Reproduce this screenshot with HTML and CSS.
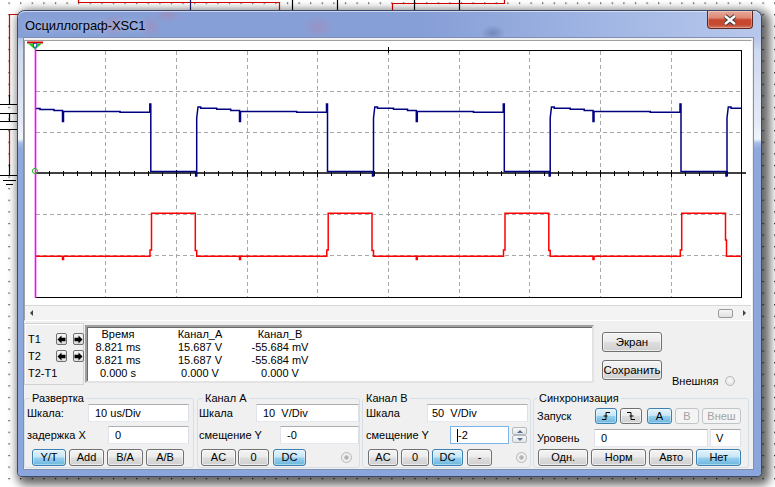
FILE: index.html
```html
<!DOCTYPE html>
<html lang="ru">
<head>
<meta charset="utf-8">
<title>Осциллограф-XSC1</title>
<link rel="stylesheet" href="styles.css">
</head>
<body>
<svg class="desk" width="775" height="487" viewBox="0 0 775 487">
  <defs>
    <pattern id="dots" x="8.5" y="2.5" width="11.6" height="11.6" patternUnits="userSpaceOnUse">
      <rect width="1.2" height="1.2" fill="#111"/>
    </pattern>
  </defs>
  <rect width="775" height="487" fill="#fff"/>
  <rect width="775" height="487" fill="url(#dots)"/>
  <g fill="none" stroke-width="1.2">
    <path stroke="#d00" d="M78.5 0V2.5H279.5V12"/>
    <path stroke="#d00" d="M504.5 0V3.5H392.5V12"/>
    <path stroke="#1a1a6a" d="M190.5 0V12"/>
    <path stroke="#000" d="M292.5 0V12M337.5 0V12M414.5 0V12M459.5 0V12"/>
    <path stroke="#d00" d="M20 14.5H9.5V95"/>
    <path stroke="#000" d="M9.5 95V104.5M0 104.5H18M0 113.5H18M9.5 113.5V121.5M0 121.5H18M0 129.5H18"/>
    <path stroke="#d00" d="M9.5 129.5V164"/>
    <path stroke="#000" d="M9.5 164V175.5M0 175.5H18M3 180.5H16M6 184.5H13"/>
  </g>
</svg>

<div class="win">
  <div class="titlebar">
    <span class="title">Осциллограф-XSC1</span>
    <div class="close">
      <svg width="16" height="12" viewBox="0 0 16 12"><path d="M3 2L13 10M13 2L3 10" stroke="#3a3a3a" stroke-width="4.4"/><path d="M3 2L13 10M13 2L3 10" stroke="#fff" stroke-width="2.4"/></svg>
    </div>
  </div>

  <div class="client">
    <div class="scope">
      <svg class="plot" width="726" height="264" viewBox="25 41 726 264">
        <rect x="25" y="41" width="726" height="264" fill="#fff"/>
        <g stroke="#a8a8a8" stroke-width="1" stroke-dasharray="4 3" fill="none">
          <path d="M105.5 51V297M176.5 51V297M247.5 51V297M317.5 51V297M388.5 51V297M459.5 51V297M529.5 51V297M600.5 51V297M671.5 51V297"/>
          <path d="M36 91.5H742M36 132.5H742M36 214.5H742M36 255.5H742"/>
        </g>
        <path d="M35 173H746" stroke="#000" stroke-width="1.6"/>
        <path stroke="#000" stroke-width="1" d="M49.5 171V176M63.5 171V176M77.5 171V176M91.5 171V176M119.5 171V176M134.5 171V176M148.5 171V176M162.5 171V176M190.5 171V176M204.5 171V176M218.5 171V176M232.5 171V176M261.5 171V176M275.5 171V176M289.5 171V176M303.5 171V176M331.5 171V176M346.5 171V176M360.5 171V176M374.5 171V176M402.5 171V176M416.5 171V176M430.5 171V176M445.5 171V176M473.5 171V176M487.5 171V176M501.5 171V176M515.5 171V176M544.5 171V176M558.5 171V176M572.5 171V176M586.5 171V176M614.5 171V176M628.5 171V176M643.5 171V176M657.5 171V176M685.5 171V176M699.5 171V176M713.5 171V176M727.5 171V176M105.5 170V177M176.5 170V177M247.5 170V177M317.5 170V177M388.5 169V178M459.5 170V177M529.5 170V177M600.5 170V177M671.5 170V177M388.5 47V53"/>
        <rect x="35.5" y="50.5" width="706" height="247" fill="none" stroke="#000" stroke-width="1"/>
        <path fill="none" stroke="#ff0000" stroke-width="1.5" d="M35,256.3 L62.5,256.3 L62.5,259.5 L63.5,259.5 L63.5,256.3 L150,256.3 L150,250 L151.5,250 L151.5,213.3 L195.3,213.3 L195.3,250.5 L196.7,250.5 L196.7,256.3 L239.5,256.3 L239.5,259.5 L240.5,259.5 L240.5,256.3 L326.8,256.3 L326.8,250 L328.2,250 L328.2,213.3 L372,213.3 L372,250.5 L373.5,250.5 L373.5,256.3 L416.3,256.3 L416.3,259.5 L417.3,259.5 L417.3,256.3 L503.5,256.3 L503.5,250 L505,250 L505,213.3 L548.8,213.3 L548.8,250.5 L550.2,250.5 L550.2,256.3 L593,256.3 L593,259.5 L594,259.5 L594,256.3 L680.3,256.3 L680.3,250 L681.7,250 L681.7,213.3 L725.5,213.3 L725.5,240 L726.5,240 L726.5,256.3 L742,256.3"/>
        <path fill="none" stroke="#000080" stroke-width="1.5" d="M35,108.5 L40,108.5 L40,109.5 L54,109.5 L54,110.5 L62.5,110.5 L62.5,121.5 L63.5,121.5 L63.5,111.5 L120,111.5 L120,112.3 L149.8,112.3 L149.8,104 L150.8,104 L150.8,171.5 L195.7,171.5 L195.7,176 L196.7,176 L196.7,118 L198,107 L200.7,107 L200.7,108.3 L216.7,108.3 L216.7,109.3 L230.7,109.3 L230.7,110.5 L239.5,110.5 L239.5,121.5 L240.5,121.5 L240.5,111.5 L296.7,111.5 L296.7,112.3 L326.5,112.3 L326.5,104 L327.5,104 L327.5,171.5 L372.5,171.5 L372.5,176 L373.5,176 L373.5,118 L374.8,107 L377.5,107 L377.5,108.3 L393.5,108.3 L393.5,109.3 L407.5,109.3 L407.5,110.5 L416.3,110.5 L416.3,121.5 L417.3,121.5 L417.3,111.5 L473.5,111.5 L473.5,112.3 L503.3,112.3 L503.3,104 L504.3,104 L504.3,171.5 L549.2,171.5 L549.2,176 L550.2,176 L550.2,118 L551.5,107 L554.2,107 L554.2,108.3 L570.2,108.3 L570.2,109.3 L584.2,109.3 L584.2,110.5 L593,110.5 L593,121.5 L594,121.5 L594,111.5 L650.2,111.5 L650.2,112.3 L680,112.3 L680,104 L681,104 L681,171.5 L726,171.5 L726,176 L727,176 L727,118 L728.3,107 L731,107 L731,108.3 L742,108.3"/>
        <path d="M35.5 44V298" stroke="#ff00ff" stroke-width="1.6"/>
        <circle cx="35" cy="171" r="2.6" fill="none" stroke="#20c020" stroke-width="1"/>
        <rect x="27" y="41.5" width="16" height="2" fill="#e00000"/>
        <path d="M28 43.5H42L35 49.5Z" fill="#22cc22"/>
        <rect x="33.5" y="43.5" width="3" height="3.5" fill="#fff" stroke="#2040c0" stroke-width="0.8"/>
      </svg>
      <div class="hscroll">
        <span class="sarrow"><i class="tri-l"></i></span>
        <span class="sfill"></span>
        <span class="thumb"></span>
        <span class="sarrow"><i class="tri-r"></i></span>
      </div>
    </div>

    <div class="readrow">
      <div class="tbox">
        <span class="tl">T1</span>
        <span class="ab"><svg width="9" height="9" viewBox="0 0 9 9"><path d="M0.5 4.5L4.5 0.5V2.8H8.5V6.2H4.5V8.5Z"/></svg></span>
        <span class="ab"><svg width="9" height="9" viewBox="0 0 9 9"><path d="M8.5 4.5L4.5 0.5V2.8H0.5V6.2H4.5V8.5Z"/></svg></span>
        <span class="tl">T2</span>
        <span class="ab"><svg width="9" height="9" viewBox="0 0 9 9"><path d="M0.5 4.5L4.5 0.5V2.8H8.5V6.2H4.5V8.5Z"/></svg></span>
        <span class="ab"><svg width="9" height="9" viewBox="0 0 9 9"><path d="M8.5 4.5L4.5 0.5V2.8H0.5V6.2H4.5V8.5Z"/></svg></span>
        <span class="tl tdiff">T2-T1</span>
      </div>
      <div class="readout">
        <span>Время</span><span>Канал_A</span><span>Канал_B</span>
        <span>8.821 ms</span><span>15.687 V</span><span>-55.684 mV</span>
        <span>8.821 ms</span><span>15.687 V</span><span>-55.684 mV</span>
        <span>0.000 s</span><span>0.000 V</span><span>0.000 V</span>
      </div>
      <div class="btncol">
        <button class="btn big">Экран</button>
        <button class="btn big">Сохранить</button>
      </div>
      <div class="ext"><span>Внешняя</span><span class="radio plain"></span></div>
    </div>

    <div class="groups">
      <fieldset class="grp g-sweep">
        <legend>Развертка</legend>
        <div class="r1"><span>Шкала:</span><span class="inp w101">10 us/Div</span></div>
        <div class="r2"><span>задержка X</span><span class="inp w81">0</span></div>
        <div class="r3 bt-sweep">
          <button class="btn on w34">Y/T</button>
          <button class="btn w35">Add</button>
          <button class="btn w36">B/A</button>
          <button class="btn w38">A/B</button>
        </div>
      </fieldset>

      <fieldset class="grp g-a">
        <legend>Канал A</legend>
        <div class="r1"><span>Шкала</span><span class="inp w103">10  V/Div</span></div>
        <div class="r2"><span>смещение Y</span><span class="inp w79">-0</span></div>
        <div class="r3 bt-a">
          <button class="btn w35">AC</button>
          <button class="btn w31">0</button>
          <button class="btn on w33">DC</button>
          <span class="radio dot ra"></span>
        </div>
      </fieldset>

      <fieldset class="grp g-b">
        <legend>Канал B</legend>
        <div class="r1"><span>Шкала</span><span class="inp w101 ib">50  V/Div</span></div>
        <div class="r2"><span>смещение Y</span><span class="inp w59 focus"><span class="caret"></span>-2</span>
          <span class="spin"><span class="sp"><i class="up"></i></span><span class="sp"><i class="dn"></i></span></span>
        </div>
        <div class="r3 bt-b">
          <button class="btn w30">AC</button>
          <button class="btn w28">0</button>
          <button class="btn on w31">DC</button>
          <button class="btn w25">-</button>
          <span class="radio dot rb"></span>
        </div>
      </fieldset>

      <fieldset class="grp g-s">
        <legend>Синхронизация</legend>
        <div class="r1 s1"><span>Запуск</span>
          <span class="trig">
            <button class="btn on w22"><svg width="10" height="10" viewBox="0 0 10 10"><path d="M1 8.5H5V1.5H9M2.5 5H6.5" fill="none" stroke="#000" stroke-width="1"/></svg></button>
            <button class="btn w22"><svg width="10" height="10" viewBox="0 0 10 10"><path d="M1 1.5H5V8.5H9M3.5 5H7.5" fill="none" stroke="#000" stroke-width="1"/></svg></button>
            <button class="btn on w25 gapl">A</button>
            <button class="btn dis w24">B</button>
            <button class="btn dis w39">Внеш</button>
          </span>
        </div>
        <div class="r2 s2"><span>Уровень</span><span class="inp w114">0</span><span class="inp w31 iv">V</span></div>
        <div class="r3 s3">
          <button class="btn w51">Одн.</button>
          <button class="btn w55">Норм</button>
          <button class="btn w45">Авто</button>
          <button class="btn on w45">Нет</button>
        </div>
      </fieldset>
    </div>
  </div>
</div>
</body>
</html>
```

FILE: styles.css
```css
* { box-sizing: border-box; }
html, body { margin: 0; padding: 0; }
body {
  width: 775px; height: 487px; overflow: hidden; position: relative;
  background: #fff;
  font-family: "Liberation Sans", Arial, sans-serif; font-size: 11px; color: #000;
}
.desk { position: absolute; left: 0; top: 0; display: block; }

.win {
  position: absolute; left: 18px; top: 11px; width: 743px; height: 465px;
  display: flex; flex-direction: column;
  border-radius: 7px 7px 4px 4px;
  background: linear-gradient(180deg, #a9bce5 0, #b7c7ea 27px, #cfd9ef 40px, #e3e9f6 110px, #f0f4fb 128px, #a6bde6 132px, #8ea9dd 138px, #8aa6dc 100%);
  box-shadow: 0 0 0 1px #3b4a66, 4px 4px 10px 5px rgba(0,0,0,.6);
}
.titlebar {
  height: 27px; flex: none;
  display: flex; justify-content: space-between; align-items: flex-start;
  padding-left: 7px;
  border-radius: 7px 7px 0 0;
  background:
    radial-gradient(ellipse 14px 12px at 95px 14px, rgba(190,120,150,.35), transparent),
    radial-gradient(ellipse 12px 12px at 132px 16px, rgba(190,120,150,.3), transparent),
    radial-gradient(ellipse 16px 12px at 300px 16px, rgba(190,120,150,.3), transparent),
    radial-gradient(ellipse 14px 8px at 150px 4px, rgba(190,120,150,.35), transparent),
    radial-gradient(ellipse 12px 8px at 475px 22px, rgba(60,80,130,.35), transparent),
    linear-gradient(90deg, #869fd7 0, #879fd7 55%, #a2b7e4 80%, #b8c8eb 100%);
  box-shadow: inset 0 1px 0 rgba(255,255,255,.55);
}
.title {
  font-size: 13px; line-height: 29px; letter-spacing: -0.1px;
  text-shadow: 0 0 6px rgba(255,255,255,.5);
}
.close {
  width: 46px; height: 18px; margin-right: 8px;
  display: flex; align-items: center; justify-content: center;
  border: 1px solid #5e2a20; border-top: none;
  border-radius: 0 0 4px 4px;
  background: linear-gradient(180deg, #e8a899 0%, #dd8a75 40%, #c9472e 52%, #c54a31 80%, #d6755e 100%);
  box-shadow: inset 0 0 0 1px rgba(255,255,255,.3);
}
.close svg { display: block; }

.client {
  flex: 1; min-height: 0;
  margin: 0 8px 7px 6px;
  background: #f0f0f0;
  display: flex; flex-direction: column;
  padding: 2px 1px 0 0;
  box-shadow: 0 0 0 1px #7d8fb2;
}

/* scope */
.scope {
  height: 281px; flex: none;
  border: 1px solid; border-color: #a0a0a0 #fff #fff #a0a0a0;
  box-shadow: inset 1px 1px 0 #696969, inset -1px -1px 0 #dcdcdc;
  display: flex; flex-direction: column;
  background: #fff;
}
.plot { display: block; flex: none; }
.hscroll {
  height: 15px; flex: none;
  display: flex; align-items: center;
  background: #f3f3f3;
  border-top: 1px solid #d8d8d8;
}
.sarrow { width: 12px; height: 14px; display: flex; align-items: center; justify-content: center; }
.sarrow:last-child { width: 14px; }
.tri-l { width: 0; height: 0; border-style: solid; border-width: 3px 3px 3px 0; border-color: transparent #404040 transparent transparent; }
.tri-r { width: 0; height: 0; border-style: solid; border-width: 3px 0 3px 3px; border-color: transparent transparent transparent #404040; }
.sfill { flex: 1; }
.thumb {
  width: 15px; height: 9px; margin-right: 4px;
  border: 1px solid #9a9a9a; border-radius: 2px;
  background: linear-gradient(#f6f6f6, #e1e1e1);
}

/* readout row */
.readrow { display: flex; align-items: flex-start; margin-top: 2px; height: 62px; flex: none; }
.tbox {
  width: 60px; height: 62px;
  border: 1px solid #d2d2d2;
  box-shadow: inset 1px 1px 0 #fff;
  display: grid;
  grid-template-columns: 22px 11px 11px;
  grid-template-rows: 12px 12px 13px;
  column-gap: 6px; row-gap: 5px;
  padding: 9px 0 0 3px;
  line-height: 13px;
}
.tl { align-self: center; }
.tdiff { grid-column: 1 / span 3; }
.ab {
  width: 11px; height: 12px;
  border: 1px solid #707070; border-radius: 2px;
  background: linear-gradient(#f5f5f5, #dcdcdc);
  display: flex; align-items: center; justify-content: center;
}
.ab svg { display: block; fill: #000; }
.readout {
  width: 509px; height: 58px;
  margin: 2px 0 0 1px;
  background: #fff;
  border: 2px solid; border-color: #a0a0a0 #e3e3e3 #e3e3e3 #a0a0a0;
  box-shadow: inset 1px 1px 0 #696969;
  display: grid;
  grid-template-columns: 62px 102px 58px;
  grid-auto-rows: 13px;
  padding-top: 1px;
  line-height: 13px;
  text-align: center;
  white-space: nowrap;
}
.btncol { display: flex; flex-direction: column; gap: 8px; margin: 9px 0 0 8px; }
.ext { display: flex; align-items: center; gap: 7px; margin-left: 10px; align-self: flex-end; height: 11px; margin-bottom: -1px; }

/* buttons */
.btn {
  font: inherit; color: #000; margin: 0; padding: 0;
  height: 17px;
  border: 1px solid #707070; border-radius: 3px;
  background: linear-gradient(180deg, #f3f3f3 0%, #ebebeb 49%, #dddddd 51%, #d0d0d0 100%);
  box-shadow: inset 0 0 0 1px rgba(255,255,255,.6);
  display: flex; align-items: center; justify-content: center;
  line-height: 13px;
}
.btn.big { width: 60px; height: 20px; font-size: 11.5px; }
.btn.on {
  border-color: #3c7fb1;
  background: linear-gradient(180deg, #e5f4fc 0%, #c4e5f6 49%, #98d1ef 51%, #6cb6dd 100%);
  box-shadow: inset 0 0 0 1px rgba(255,255,255,.4);
}
.btn.dis { border-color: #c2c5c8; background: #f4f4f4; color: #a3a3a3; box-shadow: none; }
.btn svg { display: block; }

.radio { width: 10px; height: 10px; border-radius: 50%; border: 1px solid #b8b8b8; display: block; flex: none; }
.radio.plain { background: radial-gradient(circle at 50% 40%, #fafafa, #dcdcdc); }
.radio.dot { width: 11px; height: 11px; background: radial-gradient(circle, #a9a9a9 0, #bdbdbd 30%, #f2f2f2 42%, #e4e4e4 100%); }

/* groups */
.groups { display: flex; margin-top: 8px; flex: none; }
.grp {
  margin: 0; min-width: 0;
  border: 1px solid #d5dfe5; border-radius: 3px;
  display: flex; flex-direction: column;
  padding-top: 0; padding-bottom: 1px;
}
.grp legend { padding: 0 2px; line-height: 11px; font-size: 11px; }
.g-sweep { width: 170px; padding-left: 2px; padding-right: 4px; }
.g-sweep legend { margin-left: 3px; }
.g-a { width: 163px; margin-left: 3px; padding-left: 1px; padding-right: 0; }
.g-a legend { margin-left: 4px; }
.g-b { width: 169px; margin-left: 2px; padding-left: 3px; padding-right: 2px; }
.g-b legend { margin-left: -2px; }
.g-s { width: 216px; margin-left: 2px; padding-left: 3px; padding-right: 7px; }
.g-s legend { margin-left: 0; }

.r1, .r2, .r3 { display: flex; align-items: center; flex: none; }
.r1 { height: 18px; }
.r2 { height: 18px; margin-top: 4px; }
.r3 { height: 17px; margin-top: 5px; }
.s1 { height: 16px; margin-top: 4px; }
.s2 { height: 18px; margin-top: 5px; }
.s3 { margin-top: 2px; }

.inp {
  height: 100%; margin-left: auto;
  background: #fff;
  border: 1px solid; border-color: #abadb3 #dbdfe6 #e3e9ef #e2e3ea;
  padding-left: 6px;
  display: flex; align-items: center;
  white-space: pre;
}
.inp.ib { padding-left: 4px; }
.inp.iv { margin-left: 2px; padding-left: 5px; }
.inp.focus { border-color: #7eb4ea; }
.caret { width: 1px; height: 13px; background: #000; margin-right: 0; }
.spin { display: flex; flex-direction: column; width: 15px; height: 16px; margin: 0 1px 0 3px; }
.sp {
  flex: 1; display: flex; align-items: center; justify-content: center;
  border: 1px solid #b4b9be; border-radius: 2px;
  background: linear-gradient(#f7f7f7, #e4e4e4);
}
.up { width: 0; height: 0; border-style: solid; border-width: 0 3px 3px 3px; border-color: transparent transparent #5a6f96 transparent; }
.dn { width: 0; height: 0; border-style: solid; border-width: 3px 3px 0 3px; border-color: #5a6f96 transparent transparent transparent; }

.bt-sweep { margin-left: 5px; gap: 3px; }
.bt-a { margin-left: 2px; gap: 2px; }
.bt-a .w33 { margin-left: 2px; }
.bt-b { margin-left: 2px; gap: 3px; }
.bt-b .w25 { margin-left: 1px; }
.ra { margin-left: auto; margin-right: 7px; }
.rb { margin-left: auto; margin-right: 1px; }
.trig { margin-left: auto; display: flex; gap: 3px; height: 16px; }
.trig .btn { height: 16px; }
.trig .gapl { margin-left: 2px; }
.s3 { margin-left: 1px; gap: 3px; }

.w22 { width: 22px; } .w24 { width: 24px; } .w25 { width: 25px; } .w28 { width: 28px; }
.w30 { width: 30px; } .w31 { width: 31px; } .w33 { width: 33px; } .w34 { width: 34px; }
.w35 { width: 35px; } .w36 { width: 36px; } .w38 { width: 38px; } .w39 { width: 39px; }
.w45 { width: 45px; } .w51 { width: 51px; } .w55 { width: 55px; }
.w59 { width: 59px; } .w79 { width: 79px; } .w81 { width: 81px; } .w101 { width: 101px; }
.w103 { width: 103px; } .w114 { width: 114px; }
```
